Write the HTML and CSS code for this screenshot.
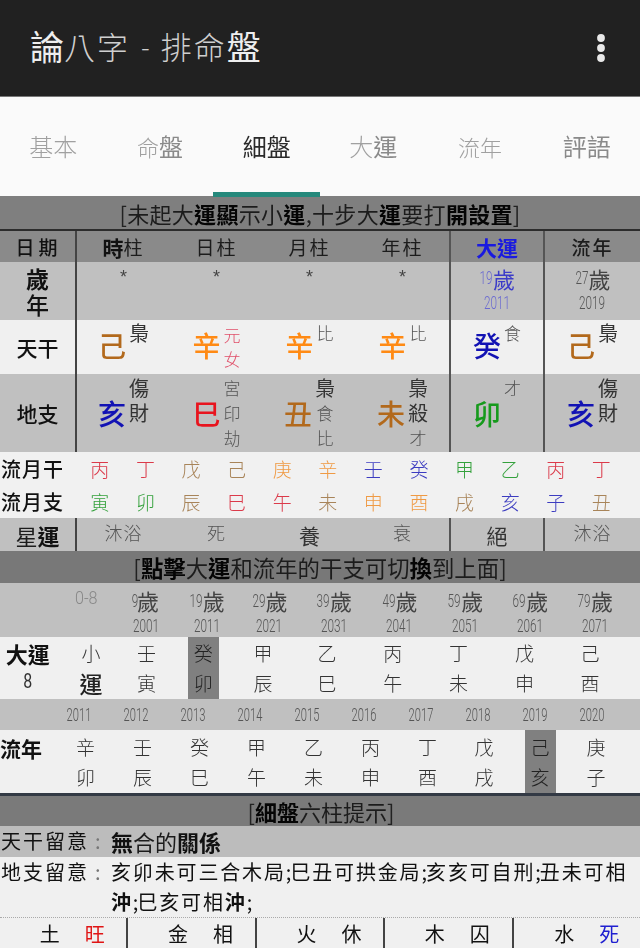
FILE: index.html
```html
<!DOCTYPE html>
<html lang="zh-Hant">
<head>
<meta charset="utf-8">
<title>論八字 - 排命盤</title>
<link rel="stylesheet" href="styles.css">
</head>
<body>
<div class="page">
<header class="appbar">
  <h1 class="title"><span class="strong">論</span><span class="thin">八字</span><span class="thin dash">-</span><span class="thin">排命</span><span class="strong">盤</span></h1>
  <svg class="menu" width="12" height="30" viewBox="0 0 12 30"><circle cx="6" cy="5" r="3.9"/><circle cx="6" cy="15" r="3.9"/><circle cx="6" cy="25" r="3.9"/></svg>
</header>
<nav class="tabs">
  <div class="tab"><span class="light">基本</span></div>
  <div class="tab"><span class="light small">命</span>盤</div>
  <div class="tab active">細盤</div>
  <div class="tab"><span class="light">大</span>運</div>
  <div class="tab"><span class="light small">流年</span></div>
  <div class="tab">評語</div>
</nav>
<div class="banner b1">[<span class="br">未起大</span><b>運顯</b><span class="br">示小</span><b>運</b>,<span class="br">十步大</span><b>運</b><span class="br">要打</span><b>開設置</b>]</div>
<div class="pillars head">
  <div class="lab sm">日期</div>
  <div class="c"><b class="h1">時</b><span class="br">柱</span></div>
  <div class="c br">日柱</div>
  <div class="c br">月柱</div>
  <div class="c br">年柱</div>
  <div class="c l blue"><b class="h1">大運</b></div>
  <div class="c l br h2">流年</div>
</div>
<div class="pillars age">
  <div class="lab stack"><b>歲</b><span>年</span></div>
  <div class="c top star">*</div>
  <div class="c top star">*</div>
  <div class="c top star">*</div>
  <div class="c top star">*</div>
  <div class="c l ag vio"><div><i>19</i><span>歲</span></div><i class="yr">2011</i></div>
  <div class="c l ag"><div><i>27</i><span>歲</span></div><i class="yr">2019</i></div>
</div>
<div class="pillars gan">
  <div class="lab">天干</div>
  <div class="c"><span class="big brown">己</span><span class="ann start"><span class="n">梟</span></span></div>
  <div class="c"><span class="big orange">辛</span><span class="ann rd"><span>元</span><span>女</span></span></div>
  <div class="c"><span class="big orange">辛</span><span class="ann start"><span>比</span></span></div>
  <div class="c"><span class="big orange">辛</span><span class="ann start"><span>比</span></span></div>
  <div class="c l"><span class="big blue2">癸</span><span class="ann start"><span>食</span></span></div>
  <div class="c l"><span class="big brown">己</span><span class="ann start"><span class="n">梟</span></span></div>
</div>
<div class="pillars zhi">
  <div class="lab">地支</div>
  <div class="c"><span class="big blue2">亥</span><span class="ann"><span class="n">傷</span><span class="n">財</span></span></div>
  <div class="c"><span class="big red">巳</span><span class="ann"><span>宮</span><span>印</span><span>劫</span></span></div>
  <div class="c"><span class="big brown">丑</span><span class="ann"><span class="n">梟</span><span>食</span><span>比</span></span></div>
  <div class="c"><span class="big brown">未</span><span class="ann"><span class="n">梟</span><span class="n">殺</span><span>才</span></span></div>
  <div class="c l"><span class="big green">卯</span><span class="ann"><span>才</span></span></div>
  <div class="c l"><span class="big blue2">亥</span><span class="ann"><span class="n">傷</span><span class="n">財</span></span></div>
</div>
<div class="months">
  <div class="mlab">流月干</div>
  <span class="fr">丙</span><span class="fr">丁</span><span class="fb">戊</span><span class="fb">己</span><span class="fo">庚</span><span class="fo">辛</span><span class="fu">壬</span><span class="fu">癸</span><span class="fg">甲</span><span class="fg">乙</span><span class="fr">丙</span><span class="fr">丁</span>
  <div class="mlab">流月支</div>
  <span class="fg">寅</span><span class="fg">卯</span><span class="fb">辰</span><span class="fr">巳</span><span class="fr">午</span><span class="fb">未</span><span class="fo">申</span><span class="fo">酉</span><span class="fb">戌</span><span class="fu">亥</span><span class="fu">子</span><span class="fb">丑</span>
</div>
<div class="pillars star-row">
  <div class="lab"><span class="br">星</span><b>運</b></div>
  <div class="c lt">沐浴</div>
  <div class="c lt">死</div>
  <div class="c nm">養</div>
  <div class="c lt">衰</div>
  <div class="c l nm">絕</div>
  <div class="c l lt">沐浴</div>
</div>
<div class="banner b2">[<b>點擊</b><span class="br">大</span><b>運</b><span class="br">和流年的干支可切</span><b>換</b><span class="br">到上面</span>]</div>
<div class="ages">
  <div class="ac"></div>
  <div class="ac"><i class="zero">0-8</i></div>
  <div class="ac"><div><i>9</i><span>歲</span></div><i class="yr">2001</i></div>
  <div class="ac"><div><i>19</i><span>歲</span></div><i class="yr">2011</i></div>
  <div class="ac"><div><i>29</i><span>歲</span></div><i class="yr">2021</i></div>
  <div class="ac"><div><i>39</i><span>歲</span></div><i class="yr">2031</i></div>
  <div class="ac"><div><i>49</i><span>歲</span></div><i class="yr">2041</i></div>
  <div class="ac"><div><i>59</i><span>歲</span></div><i class="yr">2051</i></div>
  <div class="ac"><div><i>69</i><span>歲</span></div><i class="yr">2061</i></div>
  <div class="ac"><div><i>79</i><span>歲</span></div><i class="yr">2071</i></div>
</div>
<div class="dayun">
  <div class="ylab"><b>大運</b><i class="eight">8</i></div>
  <div class="gz"><span>小</span><b class="yun">運</b></div>
  <div class="gz"><span>壬</span><span>寅</span></div>
  <div class="gz sel"><span>癸</span><span>卯</span></div>
  <div class="gz"><span>甲</span><span>辰</span></div>
  <div class="gz"><span>乙</span><span>巳</span></div>
  <div class="gz"><span>丙</span><span>午</span></div>
  <div class="gz"><span>丁</span><span>未</span></div>
  <div class="gz"><span>戊</span><span>申</span></div>
  <div class="gz"><span>己</span><span>酉</span></div>
</div>
<div class="years">
  <i>2011</i><i>2012</i><i>2013</i><i>2014</i><i>2015</i><i>2016</i><i>2017</i><i>2018</i><i>2019</i><i>2020</i>
</div>
<div class="liunian">
  <div class="nlab">流年</div>
  <div class="gz"><span>辛</span><span>卯</span></div>
  <div class="gz"><span>壬</span><span>辰</span></div>
  <div class="gz"><span>癸</span><span>巳</span></div>
  <div class="gz"><span>甲</span><span>午</span></div>
  <div class="gz"><span>乙</span><span>未</span></div>
  <div class="gz"><span>丙</span><span>申</span></div>
  <div class="gz"><span>丁</span><span>酉</span></div>
  <div class="gz"><span>戊</span><span>戌</span></div>
  <div class="gz sel"><span>己</span><span>亥</span></div>
  <div class="gz"><span>庚</span><span>子</span></div>
</div>
<div class="banner b3">[<b>細盤</b><span class="br">六柱提示</span>]</div>
<div class="note n1"><div class="nk">天干留意<em>:</em></div><div class="nv"><b>無</b><span class="br">合的</span><b>關係</b></div></div>
<div class="note n2"><div class="nk">地支留意<em>:</em></div><div class="nv">亥卯未可三合木局<span class="semi">;</span>巳丑可拱金局<span class="semi">;</span>亥亥可自刑<span class="semi">;</span>丑未可相<br><b>沖</b><span class="semi">;</span>巳亥可相<b>沖</b><span class="semi">;</span></div></div>
<div class="wuxing">
  <div>土<span class="wr">旺</span></div>
  <div>金<span>相</span></div>
  <div>火<span>休</span></div>
  <div>木<span>囚</span></div>
  <div>水<span class="wb">死</span></div>
</div>
</div>
</body>
</html>
```
FILE: styles.css
```css
* { box-sizing: border-box; }
html, body { margin: 0; padding: 0; }
body { width: 640px; height: 948px; overflow: hidden; background: #f0f0f0; }
.page { font-family: "Noto Sans CJK TC", "Noto Sans", sans-serif; color: #111; filter: blur(0.45px); height: 948px; overflow: hidden; }
b { font-weight: 700; }
i, em { font-style: normal; }
i { display: inline-block; font-family: Roboto, "Liberation Sans", sans-serif; font-weight: 300; color: #555; transform: scaleX(.65); }

.appbar { height: 97px; background: #212121; border-bottom: 1px solid #777; display: flex; align-items: center; justify-content: space-between; padding: 0 33px 4px 30px; }
.title { margin: 0; font-size: 34px; line-height: 40px; font-weight: 400; color: #eee; display: flex; align-items: center; }
.title .thin { font-weight: 300; color: #cfcfcf; font-size: 31px; letter-spacing: 2px; }
.title .dash { font-size: 26px; margin: 0 11px; letter-spacing: 0; }
.menu { fill: #e8e8e8; margin-top: 4px; }

.tabs { height: 99px; background: #fafafa; display: grid; grid-template-columns: repeat(6, 1fr); align-items: center; position: relative; }
.tab { text-align: center; font-size: 24px; line-height: 30px; color: #8a8a8a; padding-bottom: 2px; }
.tab .light { color: #a0a0a0; font-weight: 300; }
.tab .small { font-size: 22px; }
.tab.active { color: #2a2a2a; align-self: stretch; display: flex; align-items: center; justify-content: center; border-bottom: 5px solid #26897c; margin-bottom: -1px; padding: 3px 0 0; position: relative; }

.banner { display: flex; justify-content: center; align-items: center; font-size: 22px; line-height: 30px; color: #222; background: #7f7f7f; }
.banner b { color: #050505; }
.br { font-weight: 400; color: #1c1c1c; }
.b1 { height: 35px; border-bottom: 2px solid #2c2c2c; letter-spacing: .3px; }
.b2 { height: 32px; background: #787878; font-size: 22.4px; }
.b3 { height: 33px; border-top: 3px solid #333a45; background: #7a7a7a; font-size: 22px; padding-left: 2px; }

.pillars { display: grid; grid-template-columns: 77px 93px 93px 93px 93px 94px 97px; }
.lab { display: flex; align-items: center; justify-content: center; border-right: 2px solid #444; font-size: 21px; color: #111; font-weight: 500; line-height: 24px; }
.lab.sm { font-size: 19px; letter-spacing: 4px; padding-left: 2px; }
.lab.stack { flex-direction: column; font-size: 23px; line-height: 26px; }
.c { display: flex; align-items: center; justify-content: center; min-width: 0; }
.c.l { border-left: 2px solid #555; }
.head { height: 31px; background: #8a8a8a; font-size: 19px; }
.head .c { font-size: 19px; gap: 0; letter-spacing: 2px; }
.h1 { font-size: 21px; letter-spacing: 0; }
.blue { color: #1a1ae0; }
.h2 { font-weight: 500; }
.age { height: 58px; background: #c0c0c0; }
.star { align-items: flex-start; padding-top: 5px; font-size: 18px; color: #444; font-family: "Liberation Sans", sans-serif; }
.ag { flex-direction: column; color: #444; font-size: 22px; line-height: 26px; padding-bottom: 2px; }
.ag > div { display: flex; align-items: center; }
.ag i, .ac i { font-size: 18px; margin: 0 -3px; }
.ag .yr, .ac .yr { font-size: 19px; line-height: 24px; transform: scaleX(.62); margin: 0; }
.vio span { color: #3c3cc8; }
.vio i { color: #6a6ad0; }
.gan { height: 54px; background: #f0f0f0; }
.gan .big { padding-bottom: 4px; }
.zhi { height: 78px; background: #c0c0c0; }
.big { font-size: 28px; line-height: 34px; font-weight: 500; }
.brown { color: #b2691c; }
.orange { color: #ff8a14; }
.blue2 { color: #1212b4; }
.red { color: #e8141e; }
.green { color: #169a1c; }
.ann { display: flex; flex-direction: column; align-items: center; font-size: 17px; line-height: 25px; color: #555; margin-left: 3px; align-self: flex-start; padding-top: 1px; font-weight: 300; }
.ann .n { font-size: 20px; color: #333; font-weight: 400; }
.ann.start { padding-top: 0; }
.ann.rd { color: #e0506a; line-height: 24px; padding-top: 3px; }

.months { height: 66px; background: #f1f1f1; display: grid; grid-template-columns: 77px repeat(12, 45.6px); grid-auto-rows: 33px; align-items: center; font-size: 19px; font-weight: 300; }
.months span { text-align: center; }
.mlab { font-size: 20px; font-weight: 500; letter-spacing: 1px; padding-left: 1px; white-space: nowrap; }
.fr { color: #db3a4a; }
.fb { color: #a88459; }
.fo { color: #ef9a44; }
.fu { color: #3c3cc0; }
.fg { color: #34a13c; }

.star-row { height: 33px; background: #c0c0c0; color: #444; }
.star-row .lab { font-size: 22px; }
.lt { font-size: 18px; font-weight: 300; color: #555; letter-spacing: 1px; padding-bottom: 5px; }
.nm { font-size: 21px; font-weight: 400; color: #333; }

.ages { height: 54px; background: #c0c0c0; display: grid; grid-template-columns: 56px 60px 60px 61.5px 64px 65px 66px 65.5px 64.5px 65px; }
.ac { display: flex; flex-direction: column; align-items: center; padding-top: 4px; font-size: 22px; line-height: 27px; color: #444; }
.ac > div { display: flex; align-items: center; }
.ac .yr { line-height: 24px; }
.ac .zero { font-size: 19px; line-height: 22px; color: #888; margin: 0; transform: scaleX(.85); }

.dayun { height: 62px; background: #f0f0f0; display: grid; grid-template-columns: 63.5px 55px 56px 57.5px 62px 66px 65.5px 66px 66px 65px; }
.gz { display: flex; flex-direction: column; align-items: center; justify-content: center; font-size: 19px; line-height: 30px; color: #333; font-weight: 300; }
.gz.sel { background: #808080; justify-self: center; width: 31px; color: #222; }
.yun { font-size: 23px; color: #222; font-weight: 500; }
.ylab { display: flex; flex-direction: column; align-items: center; font-size: 22px; line-height: 32px; padding-right: 8px; }
.eight { font-size: 20px; line-height: 24px; color: #333; transform: scaleX(.8); font-weight: 400; }

.years { height: 31px; background: #c0c0c0; display: grid; grid-template-columns: repeat(10, 57.1px); padding-left: 50px; align-items: center; justify-items: center; }
.years i { font-size: 18px; color: #555; transform: scaleX(.62); }

.liunian { height: 63px; background: #f0f0f0; display: grid; grid-template-columns: 57px repeat(7, 57px) 56px 56px 56px; }
.nlab { font-size: 21px; font-weight: 700; line-height: 30px; padding-top: 3px; white-space: nowrap; letter-spacing: 0; }

.note { display: flex; font-size: 20px; line-height: 30px; }
.nk { width: 111px; flex: none; font-weight: 400; white-space: nowrap; letter-spacing: 2px; font-size: 20px; padding-left: 1px; }
.nk em { color: #777; margin-left: 6px; }
.nv { flex: 1; min-width: 0; }
.n1 { height: 31px; background: #bcbcbc; }
.n1 .nv { font-size: 22px; }
.n2 { height: 60px; background: #f0f0f0; }
.n2 .nv { letter-spacing: 1.85px; font-size: 20px; line-height: 30px; white-space: nowrap; }
.semi { letter-spacing: -1px; }
.wuxing { height: 31px; border-top: 1px dotted #aaa; display: grid; grid-template-columns: repeat(5, 128.4px); background: #f0f0f0; }
.wuxing div { display: flex; justify-content: center; align-items: center; gap: 25px; font-size: 20px; padding-left: 18px; border-right: 2px solid #444; }
.wuxing div:last-child { border-right: none; }
.wr { color: #e01414; }
.wb { color: #2020d0; }
```
